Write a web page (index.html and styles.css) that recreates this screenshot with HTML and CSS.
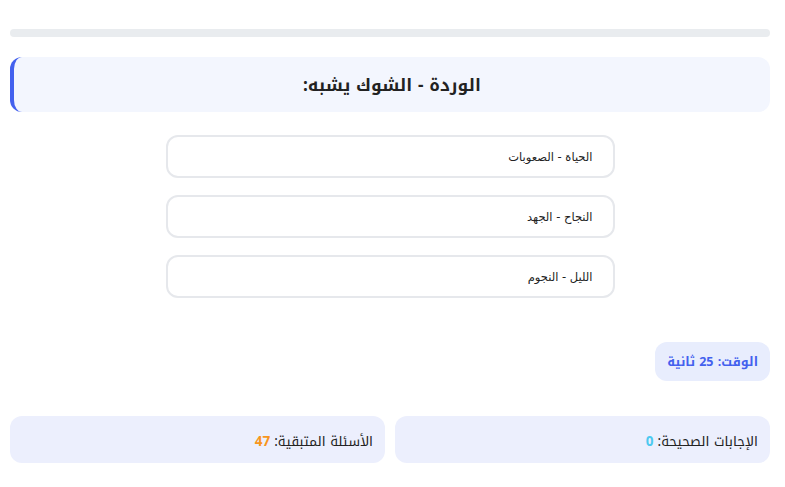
FILE: index.html
```html
<!DOCTYPE html>
<html lang="ar" dir="rtl">
<head>
<meta charset="utf-8">
<link rel="stylesheet" href="styles.css">
</head>
<body>
<div class="app">
  <div class="progress"><div class="progress-fill"></div></div>
  <div class="question">الوردة - الشوك يشبه:</div>
  <div class="options">
    <div class="option">الحياة - الصعوبات</div>
    <div class="option">النجاح - الجهد</div>
    <div class="option">الليل - النجوم</div>
  </div>
  <div class="timer-row"><div class="timer">الوقت: 25 ثانية</div></div>
  <div class="stats">
    <div class="stat">الإجابات الصحيحة: <span class="num-correct">0</span></div>
    <div class="stat">الأسئلة المتبقية: <span class="num-left">47</span></div>
  </div>
</div>
</body>
</html>
```

FILE: styles.css
```css
* { box-sizing: border-box; }
html, body { margin: 0; padding: 0; background: #fff; }
body { font-family: "Noto Kufi Arabic", "Noto Sans", sans-serif; color: #222; }
.app { width: 760px; margin: 0 15px 0 10px; padding-top: 29px; }
.progress { height: 8px; background: #e9ecef; border-radius: 4px; overflow: hidden; }
.progress-fill { width: 0; height: 100%; background: #4361ee; }
.question {
  margin-top: 20px; height: 55px; background: #f3f6fe;
  border-left: 4px solid #4361ee; border-radius: 12px;
  display: flex; align-items: center; justify-content: center;
  font-size: 17px; font-weight: 700; color: #222;
}
.options { width: 449px; margin: 23px auto 0; display: flex; flex-direction: column; gap: 17px; }
.option {
  height: 43px; border: 2px solid #e6e8ec; border-radius: 12px; background: #fff;
  display: flex; align-items: center; padding: 0 20px;
  font-family: "DejaVu Sans", sans-serif; font-size: 11.5px; color: #222;
}
.timer-row { display: flex; margin-top: 44px; }
.timer {
  background: #e8edfd; color: #4361ee; font-weight: 700; font-size: 12.5px;
  border-radius: 12px; height: 39px; padding: 0 12px; display: flex; align-items: center;
}
.stats { display: flex; gap: 10px; margin-top: 35px; }
.stat {
  flex: 1; height: 47px; background: #eceffd; border-radius: 12px;
  display: flex; align-items: center; padding: 3px 12px 0; font-size: 13.5px; color: #222;
}
.num-correct { color: #4cc9f0; font-weight: 700; margin-right: 4px; }
.num-left { color: #f8961e; font-weight: 700; margin-right: 4px; }
```
